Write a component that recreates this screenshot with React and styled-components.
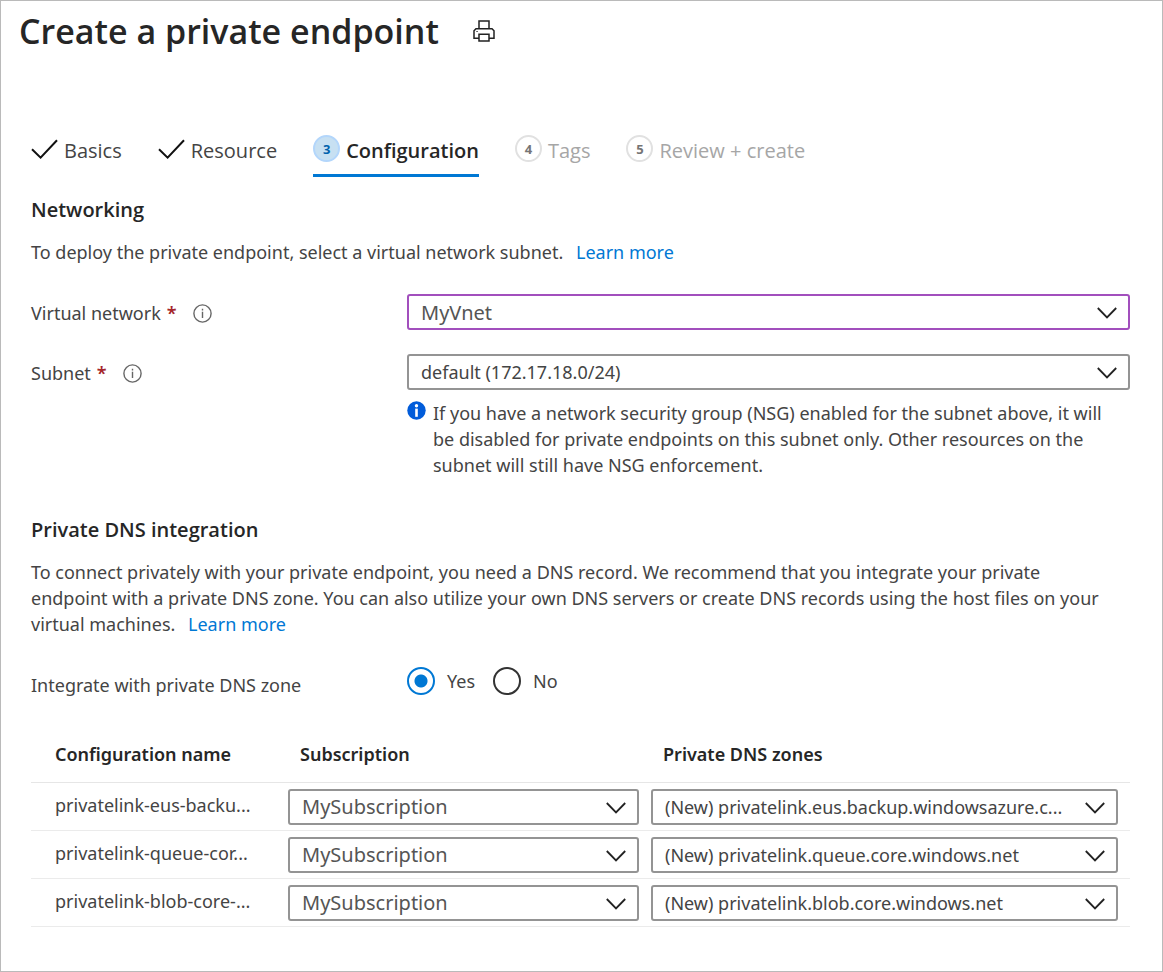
import React, { useState } from "react";
import styled, { createGlobalStyle } from "styled-components";

const headingFont = `"Open Sans", "Noto Sans", sans-serif`;

const GlobalStyle = createGlobalStyle`
  *, *::before, *::after { box-sizing: border-box; }
  body {
    margin: 0;
    background: #fff;
    color: #444;
    font-family: "Noto Sans", "Open Sans", sans-serif;
    font-size: 18px;
    line-height: 26px;
  }
`;

const Page = styled.main`
  min-height: 100vh;
  border: 1px solid #bababa;
  padding: 6px 32px 24px 30px;
`;

const TitleBar = styled.header`
  display: flex;
  align-items: center;
  gap: 34px;
  margin-left: -12px;
`;

const Title = styled.h1`
  margin: 0;
  font-family: ${headingFont};
  font-size: 34px;
  line-height: 48px;
  font-weight: 600;
  color: #262626;
`;

const IconButton = styled.button`
  display: flex;
  padding: 0;
  border: 0;
  background: none;
  color: #222;
  cursor: pointer;
`;

const Steps = styled.nav`
  display: flex;
  gap: 36px;
  margin-top: 80px;
`;

const Step = styled.a`
  display: flex;
  align-items: center;
  gap: 6px;
  height: 42px;
  padding-bottom: 12px;
  border-bottom: 3px solid ${(p) => (p.$state === "current" ? "#0078d4" : "transparent")};
  color: ${(p) => ({ done: "#444", current: "#262626", todo: "#a6a6a6" })[p.$state]};
  font-family: ${headingFont};
  font-size: 20px;
  font-weight: ${(p) => (p.$state === "current" ? 600 : 400)};
  text-decoration: none;
  white-space: nowrap;
`;

const StepLabel = styled.span`
  padding-top: 4px;
`;

const StepNumber = styled.span`
  display: grid;
  place-items: center;
  width: 27px;
  height: 27px;
  border-radius: 50%;
  border: 2px solid ${(p) => (p.$current ? "#b3d6fb" : "#e1e1e1")};
  background: ${(p) => (p.$current ? "#c7e0f2" : "#fff")};
  color: ${(p) => (p.$current ? "#0062ad" : "#757575")};
  font-size: 13px;
  font-weight: 700;
  line-height: 16px;
`;

const Section = styled.section`
  margin-top: ${(p) => p.$top}px;
`;

const SectionTitle = styled.h2`
  margin: 0 0 16px;
  font-family: ${headingFont};
  font-size: 20px;
  line-height: 26px;
  font-weight: 600;
  color: #262626;
`;

const Text = styled.p`
  margin: 0;
  padding-right: 14px;
`;

const Link = styled.a`
  margin-left: 8px;
  color: #0078d4;
  text-decoration: none;
`;

const Field = styled.div`
  display: grid;
  grid-template-columns: 376px minmax(0, 1fr);
  align-items: center;
  margin-top: ${(p) => p.$top}px;
`;

const FieldLabel = styled.div`
  display: flex;
  align-items: center;
  padding-top: 2px;
`;

const Required = styled.span`
  margin-left: 6px;
  color: #a4262c;
  font-weight: 600;
`;

const InfoButton = styled(IconButton)`
  margin-left: 16px;
`;

const SelectBox = styled.div`
  position: relative;
`;

const Select = styled.select`
  display: block;
  appearance: none;
  width: 100%;
  height: 36px;
  padding: 0 48px 0 12px;
  border: 2px solid ${(p) => (p.$active ? "#a24fbd" : "#949494")};
  border-radius: 3px;
  background: #fff;
  color: ${(p) => (p.$large ? "#555" : "#444")};
  font-family: inherit;
  font-size: ${(p) => (p.$large ? 20 : 18)}px;
  text-overflow: ellipsis;
  white-space: nowrap;
  overflow: hidden;
`;

const SelectArrow = styled.svg`
  position: absolute;
  right: 13px;
  top: 13px;
  pointer-events: none;
`;

const Note = styled.div`
  display: flex;
  gap: 7px;
  margin: 10px 0 0 376px;

  svg { flex: none; margin-top: 1px; }
`;

const Radios = styled.div`
  display: flex;
  gap: 18px;
`;

const RadioLabel = styled.label`
  display: flex;
  align-items: center;
  gap: 12px;
`;

const Radio = styled.input`
  appearance: none;
  width: 28px;
  height: 28px;
  margin: 0;
  border: 2px solid #333;
  border-radius: 50%;

  &:checked {
    border-color: #0078d4;
    background: radial-gradient(circle, #0078d4 6px, #fff 7px);
  }
`;

const GroupLabel = styled.span`
  padding-top: 8px;
`;

const Table = styled.table`
  width: 100%;
  margin-top: 28px;
  border-collapse: collapse;
  table-layout: fixed;
`;

const HeadCell = styled.th`
  width: ${(p) => p.$width};
  height: 56px;
  padding: 0 12px 0 ${(p) => p.$indent}px;
  border-bottom: 1px solid #e6e6e6;
  color: #262626;
  font-weight: 600;
  text-align: left;
`;

const Cell = styled.td`
  height: 48px;
  padding: 6px 12px 5px 0;
  border-bottom: 1px solid #ebebeb;
`;

const NameCell = styled(Cell)`
  padding: 0 24px 2px;
  white-space: nowrap;
`;

function CheckIcon() {
  return (
    <svg width="27" height="20" viewBox="0 0 27 20" fill="none" stroke="#111" strokeWidth="2" aria-hidden="true">
      <path d="M1 10.2 9.6 18.6 26 1.2" />
    </svg>
  );
}

function PrinterIcon() {
  return (
    <svg width="22" height="22" viewBox="0 0 22 22" fill="none" stroke="currentColor" strokeWidth="1.5" aria-hidden="true">
      <path d="M6 8.5V1h10v7.5" />
      <path d="M6 18.3H1V10.8L3 8.7H19L21 10.8V18.3H16" />
      <path d="M6 14.3h10V21H6z" />
      <path d="M3.4 11.5h1.3" strokeWidth="1.2" />
    </svg>
  );
}

function InfoIcon() {
  return (
    <svg width="19" height="19" viewBox="0 0 19 19" fill="none" stroke="#666" aria-hidden="true">
      <circle cx="9.5" cy="9.5" r="8.6" strokeWidth="1.4" />
      <path d="M9.5 7.8V14M9.5 4.8v1.6" strokeWidth="1.4" />
    </svg>
  );
}

function InfoSolidIcon() {
  return (
    <svg width="19" height="19" viewBox="0 0 19 19" aria-hidden="true">
      <circle cx="9.5" cy="9.5" r="9.2" fill="#015cda" />
      <circle cx="9.5" cy="4.8" r="1.7" fill="#fff" />
      <path d="M9.5 7.6v8.2" stroke="#fff" strokeWidth="2.6" />
    </svg>
  );
}

function Dropdown({ options, ...rest }) {
  return (
    <SelectBox>
      <Select {...rest}>
        {options.map((o) => (
          <option key={o}>{o}</option>
        ))}
      </Select>
      <SelectArrow width="20" height="12" viewBox="0 0 20 12" fill="none" stroke="#222" strokeWidth="1.8" aria-hidden="true">
        <path d="M.8 1 10 10.4 19.2 1" />
      </SelectArrow>
    </SelectBox>
  );
}

const steps = [
  { label: "Basics", state: "done" },
  { label: "Resource", state: "done" },
  { label: "Configuration", state: "current" },
  { label: "Tags", state: "todo" },
  { label: "Review + create", state: "todo" },
];

const zones = [
  { name: "privatelink-eus-backu...", zone: "(New) privatelink.eus.backup.windowsazure.c..." },
  { name: "privatelink-queue-cor...", zone: "(New) privatelink.queue.core.windows.net" },
  { name: "privatelink-blob-core-...", zone: "(New) privatelink.blob.core.windows.net" },
];

export default function App() {
  const [integrate, setIntegrate] = useState("Yes");

  return (
    <>
      <GlobalStyle />
      <Page>
        <TitleBar>
          <Title>Create a private endpoint</Title>
          <IconButton type="button" aria-label="Print">
            <PrinterIcon />
          </IconButton>
        </TitleBar>

        <Steps aria-label="Steps">
          {steps.map(({ label, state }, i) => (
            <Step key={label} href="#" $state={state} aria-current={state === "current" ? "step" : undefined}>
              {state === "done" ? <CheckIcon /> : <StepNumber $current={state === "current"}>{i + 1}</StepNumber>}
              <StepLabel>{label}</StepLabel>
            </Step>
          ))}
        </Steps>

        <Section $top={20}>
          <SectionTitle>Networking</SectionTitle>
          <Text>
            To deploy the private endpoint, select a virtual network subnet. <Link href="#">Learn more</Link>
          </Text>

          <Field $top={29}>
            <FieldLabel>
              <label htmlFor="vnet">Virtual network</label>
              <Required>*</Required>
              <InfoButton type="button" aria-label="About virtual network">
                <InfoIcon />
              </InfoButton>
            </FieldLabel>
            <Dropdown id="vnet" options={["MyVnet"]} $active $large />
          </Field>
          <Field $top={24}>
            <FieldLabel>
              <label htmlFor="subnet">Subnet</label>
              <Required>*</Required>
              <InfoButton type="button" aria-label="About subnet">
                <InfoIcon />
              </InfoButton>
            </FieldLabel>
            <Dropdown id="subnet" options={["default (172.17.18.0/24)"]} />
          </Field>
          <Note>
            <InfoSolidIcon />
            <Text>
              If you have a network security group (NSG) enabled for the subnet above, it will be disabled for private
              endpoints on this subnet only. Other resources on the subnet will still have NSG enforcement.
            </Text>
          </Note>
        </Section>

        <Section $top={39}>
          <SectionTitle>Private DNS integration</SectionTitle>
          <Text>
            To connect privately with your private endpoint, you need a DNS record. We recommend that you integrate your
            private endpoint with a private DNS zone. You can also utilize your own DNS servers or create DNS records
            using the host files on your virtual machines. <Link href="#">Learn more</Link>
          </Text>

          <Field $top={27} role="radiogroup" aria-labelledby="integrate-label">
            <GroupLabel id="integrate-label">Integrate with private DNS zone</GroupLabel>
            <Radios>
              {["Yes", "No"].map((v) => (
                <RadioLabel key={v}>
                  <Radio type="radio" name="integrate" checked={integrate === v} onChange={() => setIntegrate(v)} />
                  {v}
                </RadioLabel>
              ))}
            </Radios>
          </Field>

          <Table>
            <thead>
              <tr>
                <HeadCell $width="257px" $indent={24}>Configuration name</HeadCell>
                <HeadCell $width="363px" $indent={12}>Subscription</HeadCell>
                <HeadCell $indent={12}>Private DNS zones</HeadCell>
              </tr>
            </thead>
            <tbody>
              {zones.map(({ name, zone }) => (
                <tr key={name}>
                  <NameCell>{name}</NameCell>
                  <Cell>
                    <Dropdown options={["MySubscription"]} aria-label={`Subscription for ${name}`} $large />
                  </Cell>
                  <Cell>
                    <Dropdown options={[zone]} aria-label={`Private DNS zone for ${name}`} />
                  </Cell>
                </tr>
              ))}
            </tbody>
          </Table>
        </Section>
      </Page>
    </>
  );
}
